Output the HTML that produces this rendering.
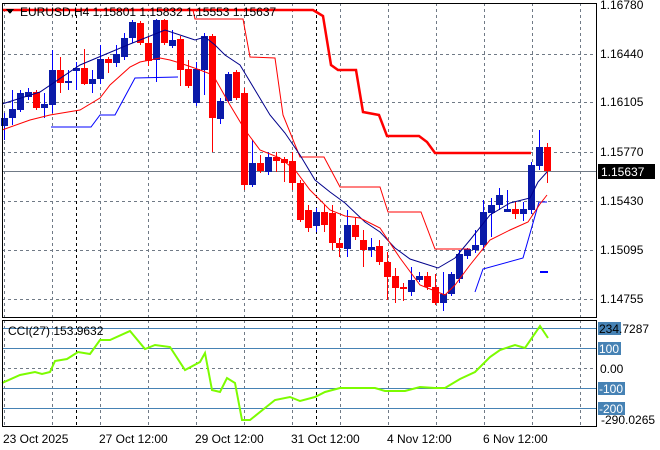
<!DOCTYPE html><html><head><style>body{margin:0;background:#fff}svg{display:block}text{font-family:"Liberation Sans",sans-serif;font-size:12px;fill:#000}</style></head><body>
<svg width="660" height="450" viewBox="0 0 660 450" xmlns="http://www.w3.org/2000/svg" shape-rendering="crispEdges">
<rect width="660" height="450" fill="#fff"/>
<g stroke="#707a86" stroke-dasharray="3,3" stroke-width="1">
<path d="M4.5 3V317M52.5 3V317M100.5 3V317M148.5 3V317M196.5 3V317M244.5 3V317M292.5 3V317M340.5 3V317M388.5 3V317M436.5 3V317M484.5 3V317M532.5 3V317M580.5 3V317"/>
<path d="M4.5 320V426M52.5 320V426M100.5 320V426M148.5 320V426M196.5 320V426M244.5 320V426M292.5 320V426M340.5 320V426M388.5 320V426M436.5 320V426M484.5 320V426M532.5 320V426M580.5 320V426"/>
<path d="M2 54.5H596M2 102.5H596M2 152.5H596M2 201.5H596M2 250.5H596M2 299.5H596M2 368.5H596"/>
</g>
<g stroke="#000" stroke-dasharray="3,3"><path d="M76.5 3V317M316.5 3V317M76.5 320V426M316.5 320V426"/></g>
<path d="M2 171.5H596" stroke="#707a86"/>
<g stroke="#4682b4"><path d="M2 328.5H596M2 348.5H596M2 388.5H596M2 408.5H596"/></g>
<g id="c"></g>
<g fill="none" shape-rendering="auto">
<polyline stroke="#f00" stroke-width="2.5" points="2,10 313,10 318,13 323,16 331,65 338,70 356,70 363,112 379,115 387,136 419,136 427,142 435,153 531,153"/>
<polyline stroke="#f00" stroke-width="1" points="193,10 195,19 243,19 250,57 275,58 283,115 300,157 324,157 340,187 380,187 388,212 421,212 435,249 470,249"/>
<polyline stroke="#00f" stroke-width="1" points="51,127 91,127 100,115 115,115 135,78 178,77"/>
<polyline stroke="#00f" stroke-width="1" points="475,292 483,269 523,258 539,202 547,202"/>
<path d="M540 272H548" stroke="#00f" stroke-width="2"/>
<polyline stroke="#00008b" stroke-width="1" points="2,104 40,92 80,65 130,44 165,30 180,35 195,40 205,37 215,45 225,55 240,65 255,90 270,115 285,133 300,155 315,180 330,192 345,203 365,222 380,232 395,248 410,259 438,268 455,258 470,240 490,215 510,203 530,198 538,182 547,172"/>
<polyline stroke="#f00" stroke-width="1" points="2,130 30,120 50,115 80,110 100,98 110,85 130,67 140,62 160,58 170,60 180,63 200,70 213,75 230,105 245,130 260,150 280,158 295,170 310,190 330,210 345,216 360,218 380,228 400,258 420,285 445,295 455,285 470,265 490,240 510,230 528,222 540,204 547,195"/>
<polyline stroke="#7cfc00" stroke-width="2" points="2,383 20,375 35,372 42,374 50,372 55,361 67,359 78,352 90,354 100,340 110,340 130,331 145,349 155,345 170,347 185,370 200,362 205,353 212,390 220,392 227,378 235,383 242,420 250,420 265,408 275,400 290,397 300,401 315,397 325,392 340,388 345,388 375,388 385,391 405,391 420,387 435,388 445,388 460,379 475,372 490,357 500,350 515,345 525,348 540,326 548,338"/>
</g>
<g stroke="#000" fill="none"><rect x="2.5" y="3.5" width="594" height="314"/><rect x="2.5" y="320.5" width="594" height="106"/></g>
<path d="M6 9l4 5 4-5z" fill="#000"/>
<text x="20" y="16">EURUSD,H4  1.15801 1.15832 1.15553 1.15637</text>
<text x="8" y="335">CCI(27) 153.9632</text>
<g><text x="600" y="9">1.16780</text><text x="600" y="58">1.16440</text><text x="600" y="106">1.16105</text><text x="600" y="156">1.15770</text><text x="600" y="205">1.15430</text><text x="600" y="254">1.15095</text><text x="600" y="303">1.14755</text></g>
<rect x="598" y="164" width="57" height="15" fill="#000"/><text x="601" y="176" style="fill:#fff">1.15637</text>
<g fill="#4682b4"><rect x="598" y="322" width="23" height="13"/><rect x="598" y="342" width="23" height="13"/><rect x="598" y="382" width="27" height="13"/><rect x="598" y="402" width="27" height="13"/></g>
<text x="599" y="333">234.7287</text><text x="599" y="353" style="fill:#fff">100</text><text x="600" y="373">0.00</text><text x="599" y="393" style="fill:#fff">-100</text><text x="599" y="413" style="fill:#fff">-200</text><text x="601" y="424">-290.0265</text>
<g><text x="3" y="443">23 Oct 2025</text><text x="99" y="443">27 Oct 12:00</text><text x="195" y="443">29 Oct 12:00</text><text x="291" y="443">31 Oct 12:00</text><text x="387" y="443">4 Nov 12:00</text><text x="483" y="443">6 Nov 12:00</text></g>
<g id="cd"></g>
</svg>
<script>
var d=[[4,'b',118,126,113,140],[12,'b',109,118,90,125],[20,'b',93,110,90,112],[28,'b',92,97,88,100],[36,'r',92,108,90,110],[44,'b',104,108,93,118],[52,'b',70,105,50,113],[60,'r',70,83,57,93],[68,'b',81,83,70,90],[76,'b',68,71,62,90],[84,'r',68,84,49,85],[92,'b',79,84,70,93],[100,'b',59,79,45,84],[108,'r',59,63,57,73],[116,'b',54,63,45,67],[124,'b',38,57,33,60],[132,'b',22,38,20,43],[140,'r',23,43,21,45],[148,'r',43,61,37,66],[156,'b',20,60,19,82],[164,'r',20,43,19,45],[172,'b',40,46,30,48],[180,'r',39,70,36,86],[188,'r',69,86,60,88],[196,'b',69,103,62,106],[204,'b',36,70,33,95],[212,'r',36,118,34,152],[220,'b',101,119,98,124],[228,'b',74,101,72,103],[236,'r',72,98,70,100],[244,'r',93,185,88,190],[252,'b',163,185,140,187],[260,'r',163,171,155,173],[268,'b',157,172,152,175],[276,'r',157,161,152,172],[284,'r',159,163,157,182],[292,'r',161,183,152,190],[300,'r',183,220,180,222],[308,'r',210,228,205,232],[316,'b',212,226,208,232],[324,'r',212,225,205,232],[332,'r',213,243,205,250],[339,'r',243,248,238,257],[347,'b',225,249,210,257],[355,'r',225,237,218,240],[363,'r',240,250,230,267],[371,'b',247,250,238,257],[379,'r',246,262,240,265],[387,'r',262,277,252,300],[395,'r',276,288,268,303],[403,'r',287,289,283,301],[411,'b',280,292,267,296],[419,'b',276,280,272,282],[427,'r',276,287,272,290],[435,'r',287,303,274,305],[443,'b',294,303,272,311],[451,'b',274,294,272,296],[459,'b',254,279,250,283],[467,'b',249,256,248,259],[475,'b',245,250,230,253],[483,'b',212,245,200,250],[491,'b',205,213,198,237],[499,'b',195,205,188,210],[507,'b',209,212,190,212],[515,'r',209,214,202,219],[523,'b',209,214,202,221],[531,'b',165,210,162,214],[539,'b',147,166,130,170],[547,'r',147,171,143,183]];
var s='';d.forEach(function(c){var col=c[1]=='b'?'#0000b0':'#f00';if(c[1]=='b')col='#00008b';s+='<path d="M'+(c[0]+.5)+' '+c[4]+'V'+c[5]+'" stroke="'+(c[1]=='b'?'#0000ff':'#f00')+'"/>';s+='<rect x="'+(c[0]-3)+'" y="'+c[2]+'" width="7" height="'+Math.max(2,c[3]-c[2])+'" fill="'+(c[1]=='b'?'#0a1aa8':'#f00')+'"/>';});
document.getElementById('c').innerHTML=s;
</script>
</body></html>
